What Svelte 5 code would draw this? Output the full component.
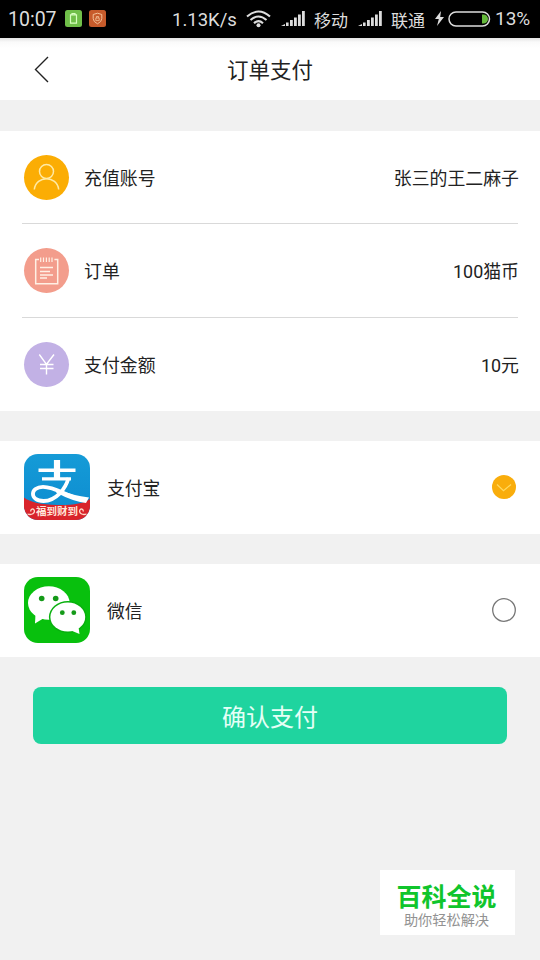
<script lang="ts">
  type Row = { icon: string; label: string; value: string };

  const rows: Row[] = [
    { icon: "user", label: "充值账号", value: "张三的王二麻子" },
    { icon: "order", label: "订单", value: "100猫币" },
    { icon: "money", label: "支付金额", value: "10元" },
  ];

  const methods = [
    { id: "alipay", name: "支付宝" },
    { id: "wechat", name: "微信" },
  ];

  let selected = "alipay";
</script>

{#snippet signal()}
  <svg class="signal" width="24" height="17" viewBox="0 0 24 17" fill="#ddd">
    <path d="M0 16 L4 14 V16Z" />
    <rect x="5" y="12.500" width="2.600" height="3.500" />
    <rect x="9" y="10" width="2.800" height="6" />
    <rect x="13" y="7.500" width="2.800" height="8.500" />
    <rect x="17" y="4.500" width="2.800" height="11.500" />
    <rect x="21" y="1" width="2.800" height="15" />
  </svg>
{/snippet}

<main>
  <div class="status">
    <span class="time">10:07</span>
    <svg class="app-icon" width="17" height="17" viewBox="0 0 17 17">
      <rect width="17" height="17" rx="2.500" fill="#70bf49" />
      <path d="M5.500 4.800h6v8.400h-6z M7 4.500V3.500h3v1" fill="none" stroke="#d8ffc0" stroke-width="1.200" />
    </svg>
    <svg class="app-icon second" width="17" height="17" viewBox="0 0 17 17">
      <rect width="17" height="17" rx="2.500" fill="#c75b2b" />
      <path d="M8.500 3.200 12.800 4.500V8.500Q12.800 11.800 8.500 13.800 4.200 11.800 4.200 8.500V4.500Z" fill="none" stroke="#f3c199" stroke-width="1" />
      <path d="M6.800 8h3.400v2.600H6.800z M7.400 8V6.500h2.200V8" fill="none" stroke="#f3c199" stroke-width=".8" />
    </svg>
    <span class="speed">1.13K/s</span>
    <svg class="wifi" width="25" height="18" viewBox="0 0 25 18" fill="none" stroke="#ddd" stroke-width="2.100">
      <path d="M1 6.500Q12.500-3.500 24 6.500" />
      <path d="M4.500 10Q12.500 3 20.500 10" />
      <path d="M8 13.200Q12.500 9 17 13.200" />
      <circle cx="12.500" cy="15.300" r="2" fill="#ddd" stroke="none" />
    </svg>
    {@render signal()}
    <span class="carrier">移动</span>
    {@render signal()}
    <span class="carrier">联通</span>
    <svg class="bolt" width="9" height="15" viewBox="0 0 9 15" fill="#ddd">
      <path d="M6 0 0 8h3.800L2 15l7-9H5.200Z" />
    </svg>
    <svg class="battery" width="43" height="16" viewBox="0 0 43 16">
      <path d="M34 3.500v9h1.500a4.500 4.500 0 0 0 0-9Z" fill="#65b83b" />
      <rect x="1" y="1" width="40.500" height="14" rx="7" fill="none" stroke="#ddd" stroke-width="1.500" />
    </svg>
    <span class="percent">13%</span>
  </div>

  <header>
    <button class="back" aria-label="返回">
      <svg width="15" height="27" viewBox="0 0 15 27" fill="none" stroke="#222" stroke-width="1.400">
        <path d="M14 1 1.500 13.500 14 26" />
      </svg>
    </button>
    <h1>订单支付</h1>
  </header>

  <section class="info">
    {#each rows as row}
      <div class="row">
        <svg class="row-icon {row.icon}" width="45" height="45" viewBox="0 0 45 45" fill="none">
          {#if row.icon === "user"}
            <g stroke="#ffeaa5" stroke-width="1.500">
              <circle cx="22.500" cy="16.500" r="7" />
              <path d="M10.300 34.500C12 20.200 33 20.200 34.700 34.500" />
            </g>
          {:else if row.icon === "order"}
            <g stroke="#fff0e4" stroke-width="1.500">
              <path d="M15 11.500h-3.300v24.300h22V11.500h-3.300" />
              <path d="M16.700 9.500v4.500M19.500 9.500v4.500M22.400 9.500v4.500M25.200 9.500v4.500M28 9.500v4.500" stroke-width="1.200" />
              <path d="M16 19.500h13M16 23.500h10M16 27h13M16 30h7" stroke-width="1.300" />
            </g>
          {:else}
            <g stroke="#fff" stroke-width="1.400">
              <path d="M15.300 12.500 22.500 22.300 30 12.500M22.500 22v10.500M16 22.500h13.500M16 26.500h13.500" />
            </g>
          {/if}
        </svg>
        <span class="label">{row.label}</span>
        <span class="value">{row.value}</span>
      </div>
    {/each}
  </section>

  {#each methods as method}
    <button class="method" on:click={() => (selected = method.id)}>
      {#if method.id === "alipay"}
        <svg width="66" height="66" viewBox="0 0 66 66">
          <defs>
            <clipPath id="tile"><rect width="66" height="66" rx="14" /></clipPath>
            <linearGradient id="sky" x1="0" y1="0" x2="0" y2="1">
              <stop offset="0" stop-color="#159bd7" />
              <stop offset="1" stop-color="#0d8bcf" />
            </linearGradient>
          </defs>
          <g clip-path="url(#tile)">
            <rect width="66" height="66" fill="url(#sky)" />
            <path d="M0 43.500Q9 50.500 33 51T66 45V66H0Z" fill="#d9242b" />
            <g fill="none" stroke="#fff">
              <path d="M14.500 16.300h37" stroke-width="3.400" />
              <path d="M33 6v19" stroke-width="6.200" />
              <path d="M18 24.800h29" stroke-width="3.200" />
              <path d="M44.500 24C41.500 35 32 47 19.500 47 5 47 6 32.800 19 32.800 31 32.800 41 41 52 44" stroke-width="3.800" />
            </g>
            <path d="M34 35.500Q49 41.500 65 43.500L62 49Q49 47.500 32 38.500Z" fill="#fff" />
            <path d="M3.500 60C8 61.500 11 59 10.300 56.500 9.500 54 6 55 7 57.500M62.500 60C58 61.500 55 59 55.700 56.500 56.500 54 60 55 59 57.500" fill="none" stroke="#ffd9c9" stroke-width="1.300" />
            <text x="33" y="61.300" text-anchor="middle" font-size="10.500" font-weight="700" fill="#ffe5d8">福到财到</text>
          </g>
        </svg>
      {:else}
        <svg width="66" height="66" viewBox="0 0 66 66">
          <rect width="66" height="66" rx="14" fill="#08c00d" />
          <ellipse cx="24.800" cy="26" rx="20.800" ry="16.700" fill="#fff" />
          <path d="M11.500 37 11 46.500 20 41Z" fill="#fff" />
          <ellipse cx="43.800" cy="40" rx="18.900" ry="16" fill="#08b00d" />
          <ellipse cx="43.800" cy="40" rx="17.400" ry="14.600" fill="#fff" />
          <path d="M47 53.500 55.500 57 54.500 50Z" fill="#fff" />
          <g fill="#149a18">
            <circle cx="17.700" cy="21.500" r="2.800" />
            <circle cx="31.700" cy="21.500" r="2.800" />
            <circle cx="38.300" cy="35.700" r="2.400" />
            <circle cx="49.800" cy="35.700" r="2.400" />
          </g>
        </svg>
      {/if}
      <span class="name">{method.name}</span>
      <svg width="24" height="24" viewBox="0 0 24 24" fill="none">
        {#if selected === method.id}
          <circle cx="12" cy="12" r="12" fill="#f9ad0c" />
          <path d="M5 9.500 11.500 15.800 19 9.500" stroke="#ffda60" stroke-width="1.200" />
        {:else}
          <circle cx="12" cy="12" r="11.300" stroke="#777" stroke-width="1.300" />
        {/if}
      </svg>
    </button>
  {/each}

  <button class="confirm">确认支付</button>

  <aside class="badge">
    <strong>百科全说</strong>
    <span>助你轻松解决</span>
  </aside>
</main>

<style>
:global(body) {
  background-color: #f1f1f1;
}
main {
  position: relative;
  height: 960px;
  overflow: hidden;
  background: #f1f1f1;
  color: #222;
  font-family: Roboto, "Noto Sans CJK SC", sans-serif;
}
svg {
  display: block;
  flex-shrink: 0;
}
button {
  border: 0;
  padding: 0;
  font: inherit;
  color: inherit;
}
.status {
  display: flex;
  align-items: center;
  height: 38px;
  padding: 0 0 1px 8px;
  box-sizing: border-box;
  background: #000;
  color: #ddd;
  font-size: 19.500px;
  white-space: nowrap;
}
.time {
  width: 57px;
  padding-top: 2px;
}
.second {
  margin-left: 7px;
}
.speed {
  width: 74px;
  margin-left: 66px;
  padding-top: 2px;
  font-size: 18.500px;
}
.wifi {
  margin-right: 10px;
}
.signal {
  margin-right: 9px;
}
.carrier {
  width: 44px;
  padding-top: 1px;
  font-size: 17px;
}
.bolt {
  margin-right: 4px;
}
.battery {
  margin-right: 4px;
}
.percent {
  font-size: 19px;
}
header {
  display: grid;
  grid-template-columns: 80px 1fr 80px;
  align-items: center;
  height: 62px;
  margin-bottom: 31px;
  background: linear-gradient(#e4e4e4, #fafafa 4px, #fff 10px);
}
.back {
  justify-self: start;
  margin-left: 34px;
  background: none;
}
h1 {
  margin: -1px 0 0;
  text-align: center;
  font-size: 21.500px;
  font-weight: 400;
}
.info {
  height: 280px;
  padding: 0 22px;
  background: #fff;
}
.row {
  display: flex;
  align-items: center;
  height: 93px;
  padding-left: 2px;
  font-size: 17.900px;
  border-bottom: 1px solid #d9d9d9;
}
.row:first-child {
  height: 92px;
}
.row:last-child {
  border: 0;
}
.row-icon {
  margin-right: 15px;
  border-radius: 50%;
}
.label,
.value {
  margin-top: -1px;
}
.user {
  background: #fbad04;
}
.order {
  background: #f39d8c;
}
.money {
  background: #c2b1e5;
}
.value {
  margin-left: auto;
  margin-right: -1px;
}
.method {
  display: flex;
  align-items: center;
  width: 100%;
  height: 93px;
  margin-top: 30px;
  padding: 0 24px 1px;
  background: #fff;
  font-size: 17.800px;
}
.name {
  flex: 1;
  margin-left: 17px;
  text-align: left;
}
.confirm {
  display: block;
  width: 474px;
  height: 57px;
  margin: 30px auto 0;
  border-radius: 8px;
  background: #1fd49f;
  color: #e5fff6;
  font-size: 24px;
}
.badge {
  position: absolute;
  left: 380px;
  top: 870px;
  display: flex;
  flex-direction: column;
  align-items: center;
  box-sizing: border-box;
  width: 135px;
  height: 65px;
  padding-right: 2px;
  background: #fff;
}
.badge strong {
  margin-top: 12px;
  color: #10c52c;
  font-size: 25px;
  font-weight: 700;
  line-height: 31px;
}
.badge span {
  color: #929292;
  font-size: 14.200px;
  line-height: 14px;
}
</style>
